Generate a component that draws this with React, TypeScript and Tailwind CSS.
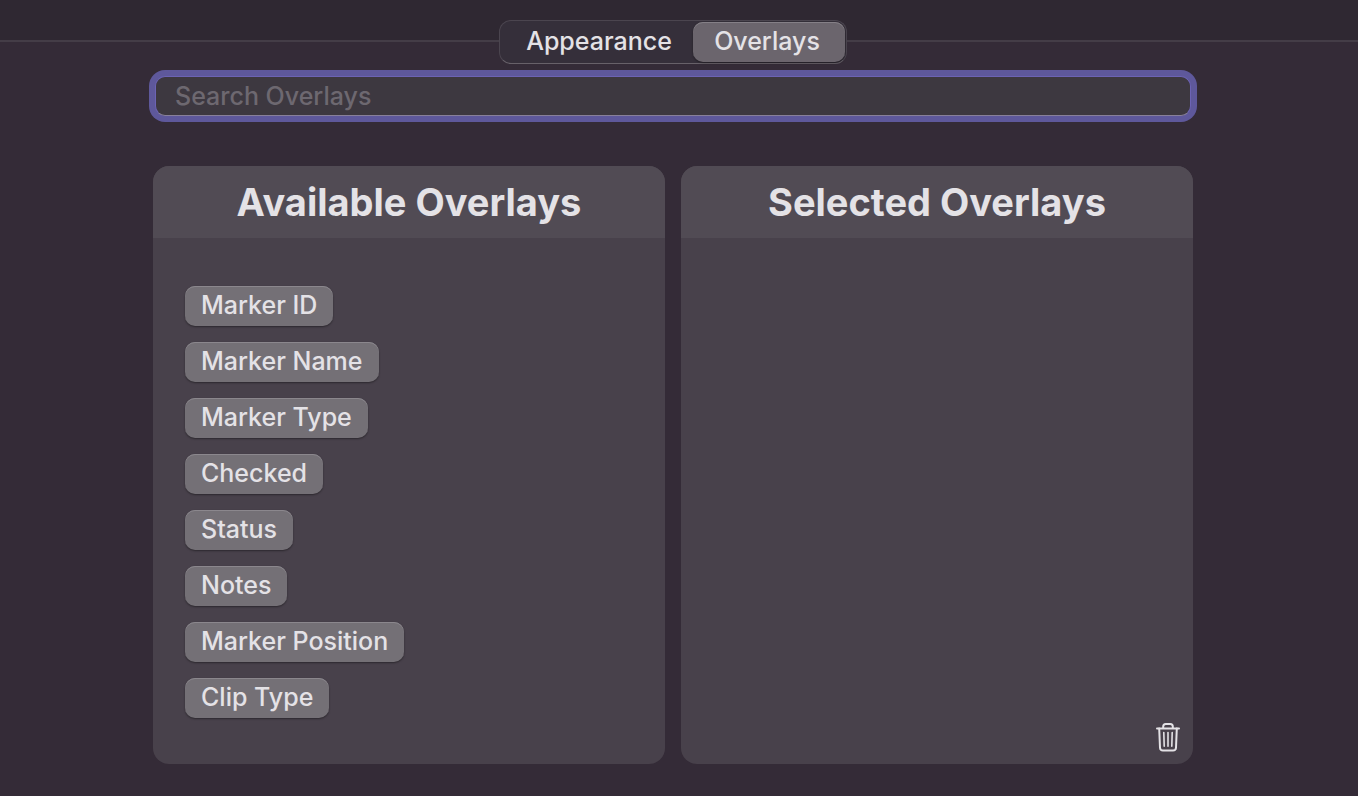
const available = [
  'Marker ID',
  'Marker Name',
  'Marker Type',
  'Checked',
  'Status',
  'Notes',
  'Marker Position',
  'Clip Type',
];

function TrashIcon() {
  return (
    <svg
      viewBox="0 0 24 30"
      className="h-[30px] w-6"
      fill="none"
      stroke="currentColor"
      strokeWidth="2"
      strokeLinecap="round"
      strokeLinejoin="round"
      aria-hidden="true"
    >
      <path d="M1 6.500H23" />
      <path d="M7.200 6V4.500Q7.200 2 9.700 2H14.300Q16.800 2 16.800 4.500V6" />
      <path d="M3.200 6.500L4 25.700Q4.200 28.500 7 28.500H17Q19.800 28.500 20 25.700L20.800 6.500" />
      <path strokeWidth="1.600" d="M7.800 10.500L8.200 24.200M12 10.500V24.200M16.200 10.500L15.800 24.200" />
    </svg>
  );
}

function Panel({ title, children }: { title: string; children?: React.ReactNode }) {
  return (
    <section className="flex min-w-0 flex-1 flex-col overflow-hidden rounded-2xl bg-[#48414b]">
      <h2 className="flex h-[72px] items-center justify-center bg-[#514b54] text-[38px] font-bold text-[#e4e2e6]">
        {title}
      </h2>
      {children}
    </section>
  );
}

export default function App() {
  return (
    <main className="flex min-h-screen flex-col bg-[linear-gradient(#2f2832_41px,#342b37_41px)] pt-5 pb-8 font-['Inter',sans-serif] text-[25px] font-medium text-[#e4e2e6]">
      <header className="flex items-center">
        <div className="mb-[2px] h-[2px] grow basis-0 bg-[#443d47]" />
        <div
          role="tablist"
          className="flex h-11 w-[348px] rounded-xl border border-[#4b454f] border-b-[#676169] bg-[#352f3a] p-px"
        >
          <button role="tab" aria-selected="false" className="flex-1 pb-[2px] pl-1 leading-[38px]">
            Appearance
          </button>
          <button
            role="tab"
            aria-selected="true"
            className="w-[152px] rounded-[10px] bg-[#6b656d] pr-1 pb-[2px] leading-[38px] shadow-[0_1px_2px_#00000066,inset_0_1px_0_#858087]"
          >
            Overlays
          </button>
        </div>
        <div className="mb-[2px] h-[2px] grow basis-3 bg-[#443d47]" />
      </header>

      <div className="flex flex-1 flex-col pt-[6px] pr-[165px] pl-[153px]">
        <div className="-mx-1 flex rounded-2xl bg-[#5e589b] p-[6px]">
          <input
            type="text"
            aria-label="Search Overlays"
            placeholder="Search Overlays"
            className="h-10 min-w-0 flex-1 rounded-[10px] border border-[#6c63b4] border-b-[#88809a] bg-[#3d3840] px-[19px] outline-none placeholder:text-[#6d6870]"
          />
        </div>

        <div className="mt-11 flex flex-1 gap-4">
          <Panel title="Available Overlays">
            <ul className="flex flex-col items-start gap-4 px-8 pt-12 pb-[46px]">
              {available.map((name) => (
                <li key={name} className="flex">
                  <button className="h-10 rounded-[10px] bg-[#747076] px-4 pb-[2px] leading-[38px] whitespace-nowrap shadow-[0_1px_2px_#00000066,inset_0_1px_0_#8b878d]">
                    {name}
                  </button>
                </li>
              ))}
            </ul>
          </Panel>
          <Panel title="Selected Overlays">
            <div className="flex flex-1 items-end justify-end pr-[13px] pb-3">
              <button aria-label="Remove overlays">
                <TrashIcon />
              </button>
            </div>
          </Panel>
        </div>
      </div>
    </main>
  );
}
